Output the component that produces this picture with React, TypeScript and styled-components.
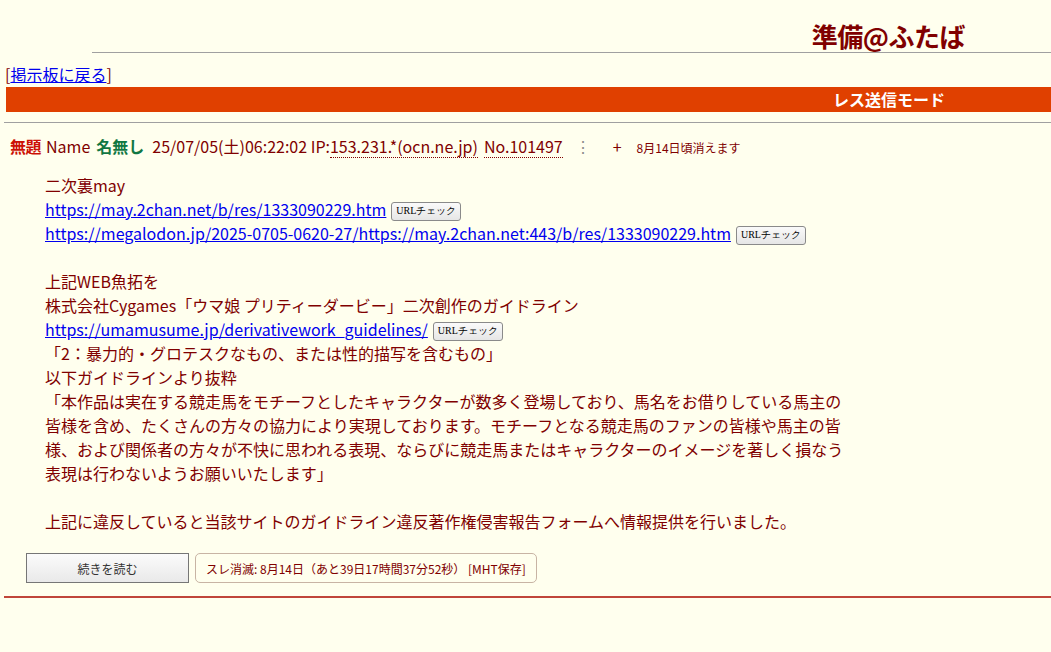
import React from 'react';
import styled, { createGlobalStyle } from 'styled-components';

const GlobalStyle = createGlobalStyle`
  html, body {
    margin: 0;
    padding: 0;
    background: #ffffee;
    color: #800000;
    font-family: "Noto Sans CJK JP", "Noto Sans", sans-serif;
    overflow: hidden;
  }
  a { color: #0000ee; }
`;

export const Page = styled.div`
  width: 1051px;
  min-height: 652px;
`;

export const TitleBar = styled.div`
  display: flex;
  justify-content: flex-end;
  padding: 19px 86px 0 0;
  height: 52px;
  box-sizing: border-box;
`;

export const Title = styled.span`
  font-size: 26px;
  font-weight: bold;
  line-height: 34px;
  color: #800000;
  letter-spacing: -0.5px;
`;

export const Rule = styled.div<{ $indent: number; $color?: string; $size?: number }>`
  margin-left: ${(p) => p.$indent}px;
  border-top: ${(p) => p.$size ?? 1}px solid ${(p) => p.$color ?? '#a0a0a0'};
`;

export const BackRow = styled.div`
  padding: 10px 0 0 5px;
  font-size: 16px;
  line-height: 22px;
  height: 34px;
  box-sizing: border-box;
`;

export const ModeBar = styled.div`
  margin-left: 6px;
  height: 25px;
  background: #e04000;
  color: #ffffff;
  font-weight: bold;
  font-size: 16px;
  line-height: 25px;
  text-align: right;
  padding-right: 106px;
`;

export const Spacer = styled.div<{ $h: number }>`
  height: ${(p) => p.$h}px;
`;

export const PostHead = styled.div`
  display: flex;
  align-items: baseline;
  padding: 12px 0 0 10px;
  font-size: 16px;
  line-height: 22px;
  white-space: nowrap;
`;

export const Subject = styled.b`
  color: #cc1105;
  margin-right: 5px;
  letter-spacing: -0.5px;
`;

export const NameLabel = styled.span`
  margin-right: 6px;
`;

export const Poster = styled.b`
  color: #117743;
  margin-right: 8px;
`;

export const Dotted = styled.span<{ $gap?: number }>`
  border-bottom: 1px dotted #800000;
  margin-right: ${(p) => p.$gap ?? 6}px;
`;

export const Menu = styled.span`
  color: #8c8c8c;
  margin: 0 22px 0 6px;
`;

export const Plus = styled.span`
  color: #800000;
  margin-right: 15px;
`;

export const Expire = styled.span`
  font-size: 12px;
`;

export const Body = styled.blockquote`
  margin: 14px 0 0 45px;
  font-size: 16px;
  line-height: 24px;
  white-space: nowrap;
`;

export const Line = styled.div`
  height: 24px;
`;

export const CheckButton = styled.button`
  margin-left: 5px;
  height: 19px;
  padding: 0 4px;
  font-family: "Liberation Serif", "DejaVu Serif", serif;
  font-size: 10px;
  color: #000;
  background: linear-gradient(#fafafa, #e6e6e6);
  border: 1px solid #8a8a8a;
  border-radius: 3px;
  vertical-align: 2px;
`;

export const Footer = styled.div`
  display: flex;
  align-items: center;
  gap: 6px;
  margin: 20px 0 0 26px;
`;

export const ReadMore = styled.button`
  width: 163px;
  height: 30px;
  font-family: "Noto Sans CJK JP", sans-serif;
  font-size: 12px;
  color: #333;
  background: linear-gradient(#fbfbfb, #e9e9e9);
  border: 1px solid #767676;
  border-radius: 0;
`;

export const ExpireBox = styled.div`
  height: 28px;
  display: flex;
  align-items: center;
  padding: 0 10px;
  border: 1px solid #c8b4a4;
  border-radius: 5px;
  font-size: 12px;
`;

const Check = () => <CheckButton>URLチェック</CheckButton>;

const App = () => {
  return (
    <Page>
      <GlobalStyle />
      <TitleBar>
        <Title>準備@ふたば</Title>
      </TitleBar>
      <Rule $indent={92} />
      <BackRow>
        [<a href="#">掲示板に戻る</a>]
      </BackRow>
      <ModeBar>レス送信モード</ModeBar>
      <Spacer $h={10} />
      <Rule $indent={4} />
      <PostHead>
        <Subject>無題</Subject>
        <NameLabel>Name</NameLabel>
        <Poster>名無し</Poster>
        <span>25/07/05(土)06:22:02 IP:</span>
        <Dotted>153.231.*(ocn.ne.jp)</Dotted>
        <Dotted>No.101497</Dotted>
        <Menu>⋮</Menu>
        <Plus>+</Plus>
        <Expire>8月14日頃消えます</Expire>
      </PostHead>
      <Body>
        <Line>二次裏may</Line>
        <Line>
          <a href="#">https://may.2chan.net/b/res/1333090229.htm</a>
          <Check />
        </Line>
        <Line>
          <a href="#">https://megalodon.jp/2025-0705-0620-27/https://may.2chan.net:443/b/res/1333090229.htm</a>
          <Check />
        </Line>
        <Line />
        <Line>上記WEB魚拓を</Line>
        <Line>株式会社Cygames「ウマ娘 プリティーダービー」二次創作のガイドライン</Line>
        <Line>
          <a href="#">https://umamusume.jp/derivativework_guidelines/</a>
          <Check />
        </Line>
        <Line>「2：暴力的・グロテスクなもの、または性的描写を含むもの」</Line>
        <Line>以下ガイドラインより抜粋</Line>
        <Line>「本作品は実在する競走馬をモチーフとしたキャラクターが数多く登場しており、馬名をお借りしている馬主の</Line>
        <Line>皆様を含め、たくさんの方々の協力により実現しております。モチーフとなる競走馬のファンの皆様や馬主の皆</Line>
        <Line>様、および関係者の方々が不快に思われる表現、ならびに競走馬またはキャラクターのイメージを著しく損なう</Line>
        <Line>表現は行わないようお願いいたします」</Line>
        <Line />
        <Line>上記に違反していると当該サイトのガイドライン違反著作権侵害報告フォームへ情報提供を行いました。</Line>
      </Body>
      <Footer>
        <ReadMore>続きを読む</ReadMore>
        <ExpireBox>スレ消滅: 8月14日（あと39日17時間37分52秒） [MHT保存]</ExpireBox>
      </Footer>
      <Spacer $h={13} />
      <Rule $indent={4} $color="#c0463a" $size={2} />
    </Page>
  );
};

export default App;
